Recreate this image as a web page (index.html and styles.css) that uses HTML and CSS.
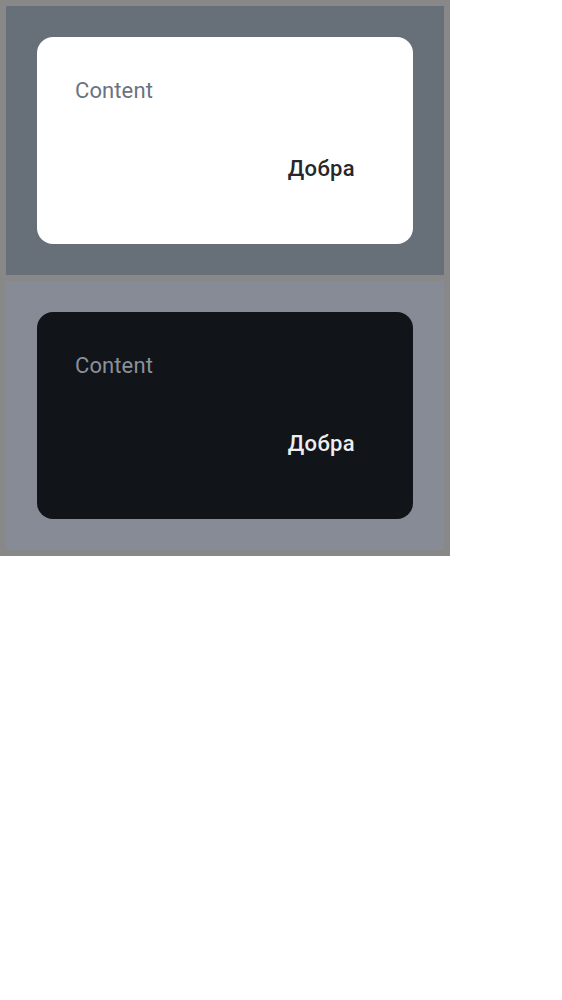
FILE: index.html
```html
<!DOCTYPE html>
<html>
<head>
<meta charset="utf-8">
<link rel="stylesheet" href="styles.css">
</head>
<body>
<div class="frame">
  <div class="panel panel-light">
    <div class="card card-light">
      <div class="card-content">Content</div>
      <div class="card-actions"><span class="action">Добра</span></div>
    </div>
  </div>
  <div class="panel panel-dark">
    <div class="card card-dark">
      <div class="card-content">Content</div>
      <div class="card-actions"><span class="action">Добра</span></div>
    </div>
  </div>
</div>
</body>
</html>
```
FILE: styles.css
```css
html, body {
  margin: 0;
  padding: 0;
  background: #ffffff;
}
body {
  font-family: Roboto, "Noto Sans", sans-serif;
}
.frame {
  width: 450px;
  box-sizing: border-box;
  background: #888888;
  padding: 6px;
  display: flex;
  flex-direction: column;
  gap: 6px;
}
.panel {
  height: 269px;
  box-sizing: border-box;
  padding: 31px;
}
.panel-light { background: #676f79; }
.panel-dark { background: #868b95; }
.card {
  height: 207px;
  box-sizing: border-box;
  border-radius: 16px;
  padding: 37px 36px 0 38px;
  display: flex;
  flex-direction: column;
}
.card-light { background: #ffffff; }
.card-dark { background: #111419; }
.card-content {
  font-size: 22px;
  line-height: 33px;
  letter-spacing: 0.1px;
}
.card-light .card-content { color: #6b7280; }
.card-dark .card-content { color: #8b919a; }
.card-actions {
  display: flex;
  justify-content: flex-end;
  margin-top: 45px;
  padding-right: 22px;
}
.action {
  font-size: 22px;
  font-weight: 500;
  line-height: 33px;
  letter-spacing: 0.4px;
}
.card-light .action { color: #24272b; }
.card-dark .action { color: #eceef1; }
```
